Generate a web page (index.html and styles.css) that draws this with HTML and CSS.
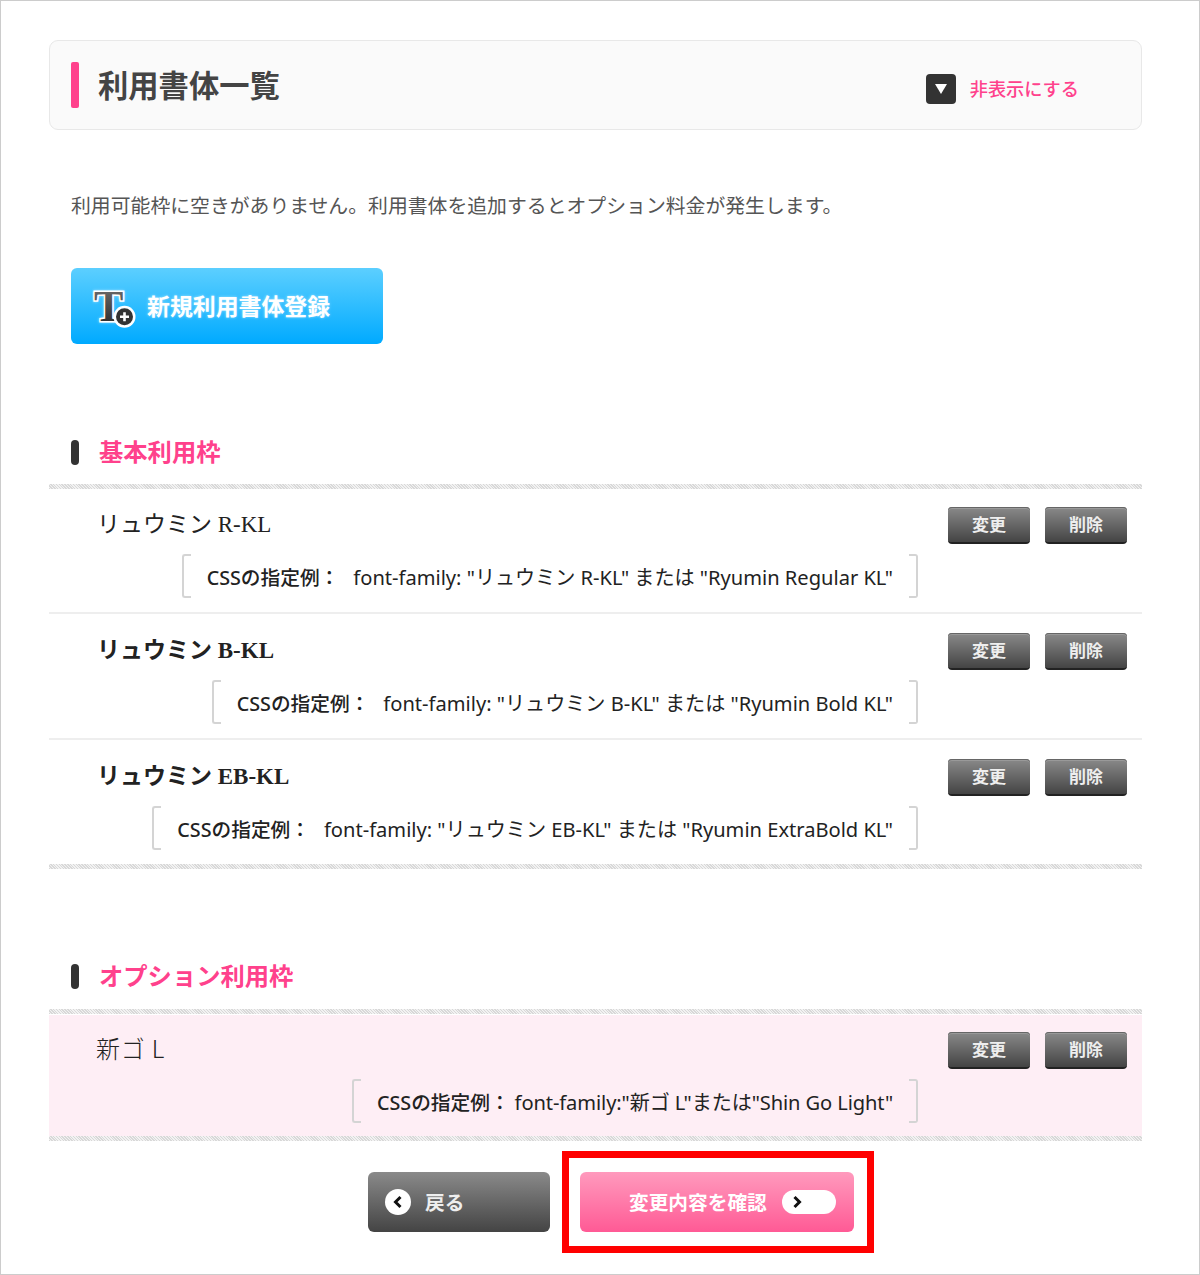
FILE: index.html

```html
<!DOCTYPE html>
<html lang="ja">
<head>
  <meta charset="UTF-8">
  <meta name="viewport" content="width=device-width, initial-scale=1.0">
  <title>利用書体一覧</title>
  <link rel="stylesheet" href="styles.css">
</head>
<body>
  <div class="page">
    <div class="panel">
      <span class="panel-bar"></span>
      <h1 class="panel-title">利用書体一覧</h1>
      <a class="toggle">
        <span class="toggle-icon"><svg width="14" height="12" viewBox="0 0 14 12"><path d="M1 1h12L7 11z" fill="#fff"/></svg></span>
        <span class="toggle-text">非表示にする</span>
      </a>
    </div>

    <p class="notice">利用可能枠に空きがありません。利用書体を追加するとオプション料金が発生します。</p>

    <a class="add-button">
      <svg class="add-icon" width="44" height="50" viewBox="0 0 44 50">
        <defs>
          <linearGradient id="tfill" x1="0" y1="0" x2="0" y2="1">
            <stop offset="0" stop-color="#777"/>
            <stop offset="1" stop-color="#222"/>
          </linearGradient>
        </defs>
        <text x="2" y="39.5" class="add-icon-t" fill="url(#tfill)">T</text>
        <circle cx="32.5" cy="35.7" r="11" fill="#fff"/>
        <circle cx="32.5" cy="35.7" r="8.5" fill="#333"/>
        <path d="M32.5 31.2v9M28 35.7h9" stroke="#fff" stroke-width="2.6"/>
      </svg>
      <span class="add-text">新規利用書体登録</span>
    </a>

    <h2 class="section-title first">基本利用枠</h2>
    <div class="rule-hatch"></div>
    <div class="font-row">
      <div class="font-head">
        <span class="font-name serif">リュウミン R-KL</span>
        <div class="row-buttons"><a class="mini-button">変更</a><a class="mini-button">削除</a></div>
      </div>
      <div class="css-line"><div class="css-note"><b>CSSの指定例：</b><span>font-family: "リュウミン R-KL" または "Ryumin Regular KL"</span></div></div>
    </div>
    <div class="font-row">
      <div class="font-head">
        <span class="font-name serif heavy">リュウミン B-KL</span>
        <div class="row-buttons"><a class="mini-button">変更</a><a class="mini-button">削除</a></div>
      </div>
      <div class="css-line"><div class="css-note"><b>CSSの指定例：</b><span>font-family: "リュウミン B-KL" または "Ryumin Bold KL"</span></div></div>
    </div>
    <div class="font-row last">
      <div class="font-head">
        <span class="font-name serif heavy">リュウミン EB-KL</span>
        <div class="row-buttons"><a class="mini-button">変更</a><a class="mini-button">削除</a></div>
      </div>
      <div class="css-line"><div class="css-note"><b>CSSの指定例：</b><span>font-family: "リュウミン EB-KL" または "Ryumin ExtraBold KL"</span></div></div>
    </div>
    <div class="rule-hatch"></div>

    <h2 class="section-title second">オプション利用枠</h2>
    <div class="rule-hatch"></div>
    <div class="font-row option">
      <div class="font-head">
        <span class="font-name sans">新ゴ L</span>
        <div class="row-buttons"><a class="mini-button">変更</a><a class="mini-button">削除</a></div>
      </div>
      <div class="css-line"><div class="css-note"><b>CSSの指定例：</b><span class="tight">font-family:"新ゴ L"または"Shin Go Light"</span></div></div>
    </div>
    <div class="rule-hatch"></div>

    <div class="actions">
      <a class="back-button">
        <span class="back-icon"><svg width="12" height="14" viewBox="0 0 12 14"><path d="M8.5 2L3.5 7l5 5" fill="none" stroke="#111" stroke-width="3"/></svg></span>
        <span class="action-text">戻る</span>
      </a>
      <div class="highlight">
        <a class="confirm-button">
          <span class="action-text">変更内容を確認</span>
          <span class="confirm-pill"><svg width="12" height="14" viewBox="0 0 12 14"><path d="M3.5 2l5 5-5 5" fill="none" stroke="#111" stroke-width="3"/></svg></span>
        </a>
      </div>
    </div>
  </div>
</body>
</html>
```

FILE: styles.css

```css
* { box-sizing: border-box; }
body {
  margin: 0;
  background: #fff;
  color: #333;
  font-family: "Noto Sans CJK JP", "Noto Sans", sans-serif;
}
.page {
  width: 1200px;
  height: 1275px;
  border: 1px solid #ccc;
  padding: 39px 57px 0 48px;
}
.panel {
  display: flex;
  align-items: center;
  height: 90px;
  padding: 0 62px 0 21px;
  background: #fafafa;
  border: 1px solid #e8e8e8;
  border-radius: 9px;
}
.panel-bar {
  width: 8px;
  height: 46px;
  background: #ff418c;
  border-radius: 2px;
}
.panel-title {
  flex: 1;
  margin: 0 0 0 19px;
  padding-bottom: 3px;
  font-size: 30.3px;
  line-height: 46px;
  font-weight: 700;
  color: #444;
}
.toggle {
  display: flex;
  align-items: center;
  gap: 14px;
  margin-top: 8px;
  font-size: 18.2px;
  font-weight: 500;
  color: #ff418c;
}
.toggle-text { margin-bottom: 2px; }
.toggle-icon {
  display: flex;
  align-items: center;
  justify-content: center;
  width: 30px;
  height: 30px;
  background: #333;
  border-radius: 4px;
}
.notice {
  margin: 60px 0 0 22px;
  font-size: 19.85px;
  line-height: 30px;
  color: #555;
}
.add-button {
  display: flex;
  align-items: center;
  width: 312px;
  height: 76px;
  margin: 48px 0 0 22px;
  padding-left: 21px;
  gap: 11px;
  background: linear-gradient(#5ccfff, #00aaff);
  border-radius: 6px;
  font-size: 22.9px;
  font-weight: 700;
  color: #fff;
  text-shadow: 0 0 3px rgba(255, 255, 255, 0.5);
}
.add-text { margin-bottom: 2px; }
.add-icon-t {
  font-family: "Liberation Serif", serif;
  font-size: 44px;
  font-weight: 700;
  stroke: #fff;
  stroke-width: 3px;
  paint-order: stroke;
}
.section-title {
  display: flex;
  align-items: flex-start;
  height: 25px;
  margin: 0 0 19px 22px;
  font-size: 24.3px;
  line-height: 21px;
  font-weight: 700;
  color: #ff418c;
}
.section-title::before {
  content: "";
  width: 8px;
  height: 25px;
  margin-right: 20px;
  background: #333;
  border-radius: 4px;
}
.section-title.first { margin-top: 96px; }
.section-title.second {
  margin-top: 95px;
  margin-bottom: 20px;
}
.rule-hatch {
  height: 5px;
  background: repeating-linear-gradient(45deg, #d8d8d8 0, #d8d8d8 1px, #f2f2f2 1px, #f2f2f2 2px);
}
.font-row {
  height: 125px;
  padding: 18px 15px 0 48px;
  border-bottom: 2px solid #eee;
}
.font-row + .font-row {
  height: 126px;
  padding-top: 19px;
}
.font-row.last {
  height: 124px;
  border-bottom: 0;
}
.font-row.option {
  height: 121px;
  margin-top: 1px;
  padding-top: 17px;
  border-bottom: 0;
  background: #feeef5;
}
.font-head {
  display: flex;
  align-items: center;
  justify-content: space-between;
  height: 37px;
}
.font-name {
  padding-bottom: 1px;
  font-size: 23px;
  line-height: 30px;
  color: #222;
}
.font-name.serif {
  font-family: "Liberation Serif", "Noto Sans CJK JP", serif;
  font-weight: 400;
}
.font-name.heavy { font-weight: 700; }
.font-name.sans {
  margin-left: -1px;
  padding-bottom: 5px;
  font-size: 24px;
  font-weight: 300;
  letter-spacing: 0.8px;
}
.row-buttons {
  display: flex;
  gap: 15px;
}
.mini-button {
  display: flex;
  align-items: center;
  justify-content: center;
  width: 82px;
  height: 37px;
  padding-bottom: 2px;
  background: linear-gradient(#8a8a8a, #444);
  border-bottom: 2px solid #222;
  border-radius: 4px;
  box-shadow: inset 0 1px 0 #666, inset 0 2px 0 #999;
  font-size: 17px;
  font-weight: 700;
  color: #eee;
}
.css-line {
  display: flex;
  justify-content: flex-end;
  margin: 12px 209px 0 0;
}
.css-note {
  display: flex;
  align-items: center;
  height: 40px;
  padding: 0 25px 0 23px;
  font-family: "Noto Sans", "Noto Sans CJK JP", sans-serif;
  font-size: 20.1px;
  color: #222;
  white-space: nowrap;
}
.css-note::before,
.css-note::after {
  content: "";
  flex: none;
  width: 7px;
  height: 40px;
  border: 2px solid #d4d4d4;
  border-right: 0;
  border-radius: 3px 0 0 3px;
  margin-left: -23px;
  margin-right: 16px;
}
.css-note::after {
  border: 2px solid #d4d4d4;
  border-left: 0;
  border-radius: 0 3px 3px 0;
  margin-left: 16px;
  margin-right: -25px;
}
.css-note b {
  font-size: 19.7px;
  font-weight: 500;
  margin-right: 14px;
}
.css-note span.tight {
  margin-left: -9px;
  letter-spacing: -0.1px;
}
.actions {
  display: flex;
  justify-content: flex-start;
  margin: 10px 0 0 319px;
  gap: 12px;
}
.back-button,
.confirm-button {
  display: flex;
  align-items: center;
  height: 60px;
  border-radius: 6px;
  font-size: 19.7px;
  font-weight: 700;
  color: #fff;
}
.action-text { margin-bottom: 2px; }
.back-button {
  width: 182px;
  margin-top: 21px;
  padding-left: 17px;
  gap: 14px;
  background: linear-gradient(#8a8a8a, #444);
  color: #eee;
}
.back-icon {
  display: flex;
  align-items: center;
  justify-content: center;
  width: 26px;
  height: 26px;
  background: #fff;
  border-radius: 50%;
}
.highlight {
  width: 312px;
  height: 102px;
  padding: 14px 0 0 11px;
  border: 7px solid #f00;
}
.confirm-button {
  width: 274px;
  padding-left: 49px;
  gap: 15px;
  background: linear-gradient(#ff9abd, #ff5a95);
}
.confirm-pill {
  display: flex;
  align-items: center;
  width: 54px;
  height: 24px;
  padding-left: 9px;
  background: #fff;
  border-radius: 12px;
}
```
